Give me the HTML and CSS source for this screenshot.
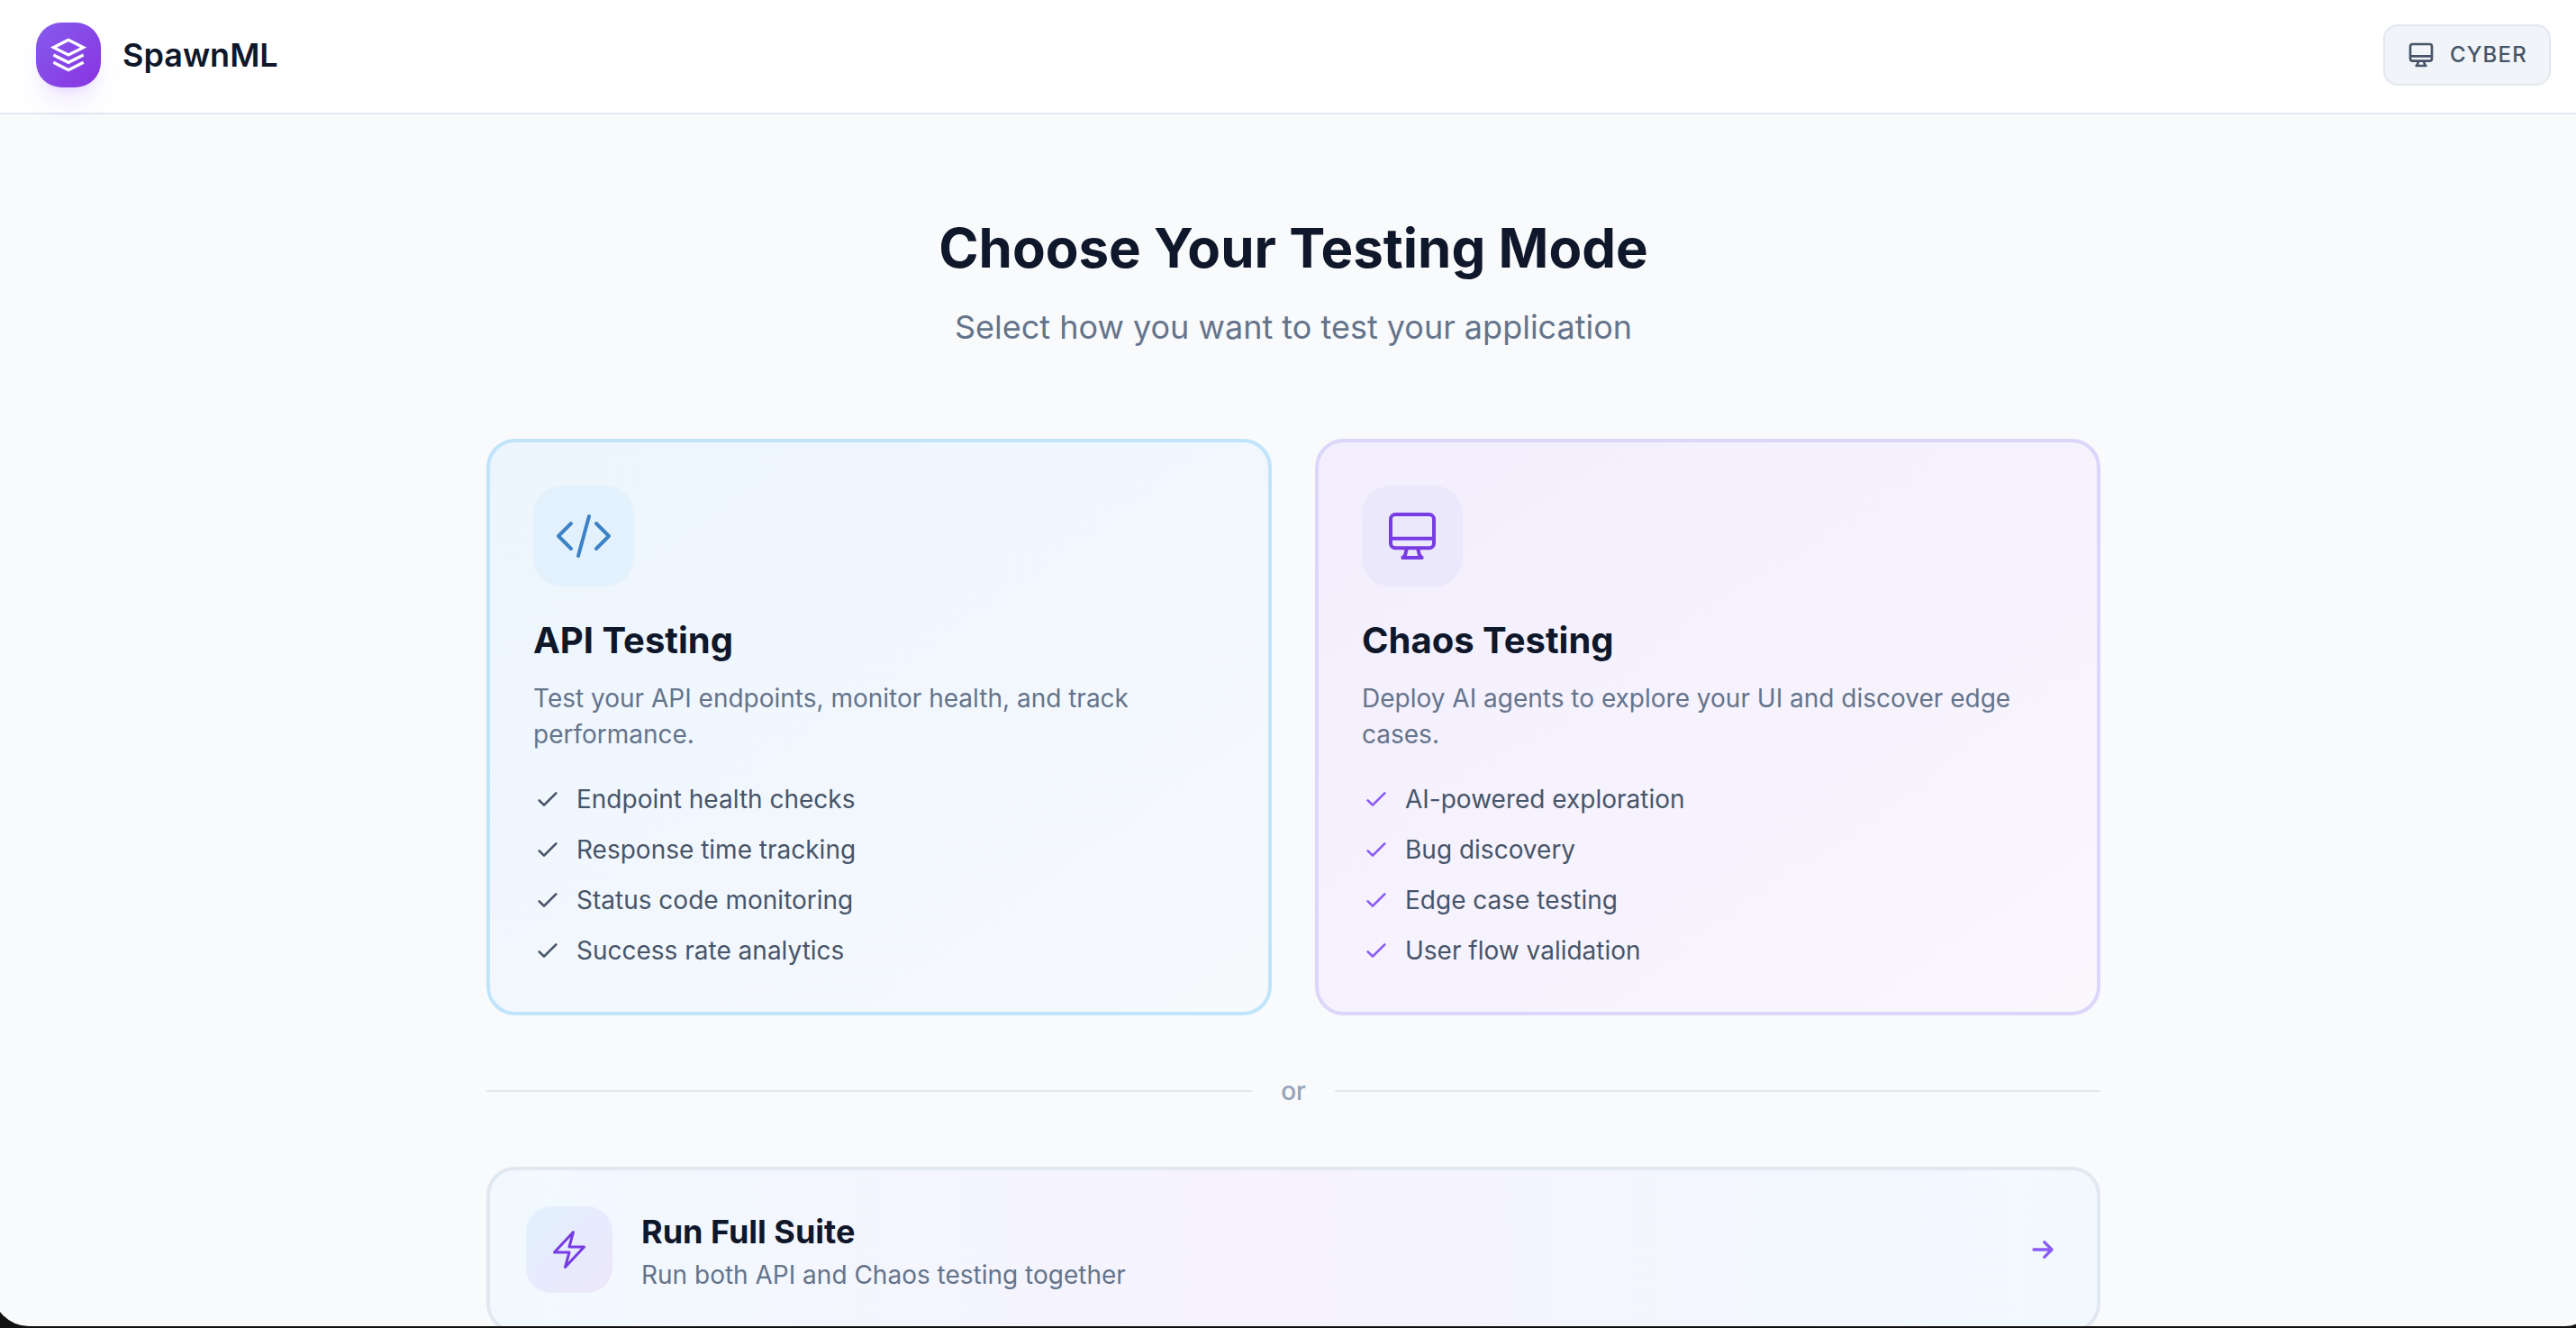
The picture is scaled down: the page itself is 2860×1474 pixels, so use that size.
FILE: index.html
```html
<!DOCTYPE html>
<html lang="en">
<head>
  <meta charset="UTF-8">
  <meta name="viewport" content="width=device-width, initial-scale=1.0">
  <title>SpawnML</title>
  <link rel="stylesheet" href="styles.css">
</head>
<body>
  <div class="app">
    <header class="header">
      <div class="brand">
        <div class="logo">
          <svg viewBox="0 0 24 24" stroke-width="2"><path d="M12 2L2 7l10 5 10-5-10-5zM2 17l10 5 10-5M2 12l10 5 10-5"/></svg>
        </div>
        <span class="brand-name">SpawnML</span>
      </div>
      <button class="theme-toggle" type="button">
        <svg class="icon round" viewBox="0 0 24 24" stroke-width="2"><path d="M9.75 17L9 20l-1 1h8l-1-1-.75-3M3 13h18M5 17h14a2 2 0 002-2V5a2 2 0 00-2-2H5a2 2 0 00-2 2v10a2 2 0 002 2z"/></svg>
        CYBER
      </button>
    </header>

    <main class="main">
      <div class="intro">
        <h1>Choose Your Testing Mode</h1>
        <p>Select how you want to test your application</p>
      </div>

      <div class="cards">
        <a class="card api" href="#api">
          <div class="tile">
            <svg class="round" viewBox="0 0 24 24" stroke-width="1.5"><path d="M17.25 6.75L22.5 12l-5.25 5.25m-10.5 0L1.5 12l5.25-5.25m7.5-3l-4.5 16.5"/></svg>
          </div>
          <h2>API Testing</h2>
          <p>Test your API endpoints, monitor health, and track performance.</p>
          <ul>
            <li><svg class="icon round" viewBox="0 0 24 24" stroke-width="2"><path d="M5 13l4 4L19 7"/></svg>Endpoint health checks</li>
            <li><svg class="icon round" viewBox="0 0 24 24" stroke-width="2"><path d="M5 13l4 4L19 7"/></svg>Response time tracking</li>
            <li><svg class="icon round" viewBox="0 0 24 24" stroke-width="2"><path d="M5 13l4 4L19 7"/></svg>Status code monitoring</li>
            <li><svg class="icon round" viewBox="0 0 24 24" stroke-width="2"><path d="M5 13l4 4L19 7"/></svg>Success rate analytics</li>
          </ul>
        </a>

        <a class="card chaos" href="#chaos">
          <div class="tile">
            <svg class="round" viewBox="0 0 24 24" stroke-width="1.5"><path d="M9.75 17L9 20l-1 1h8l-1-1-.75-3M3 13h18M5 17h14a2 2 0 002-2V5a2 2 0 00-2-2H5a2 2 0 00-2 2v10a2 2 0 002 2z"/></svg>
          </div>
          <h2>Chaos Testing</h2>
          <p>Deploy AI agents to explore your UI and discover edge cases.</p>
          <ul>
            <li><svg class="icon round" viewBox="0 0 24 24" stroke-width="2"><path d="M5 13l4 4L19 7"/></svg>AI-powered exploration</li>
            <li><svg class="icon round" viewBox="0 0 24 24" stroke-width="2"><path d="M5 13l4 4L19 7"/></svg>Bug discovery</li>
            <li><svg class="icon round" viewBox="0 0 24 24" stroke-width="2"><path d="M5 13l4 4L19 7"/></svg>Edge case testing</li>
            <li><svg class="icon round" viewBox="0 0 24 24" stroke-width="2"><path d="M5 13l4 4L19 7"/></svg>User flow validation</li>
          </ul>
        </a>
      </div>

      <div class="divider"><span>or</span></div>

      <a class="suite" href="#suite">
        <div class="suite-tile">
          <svg class="round" viewBox="0 0 24 24" stroke-width="1.5"><path d="M3.75 13.5l10.5-11.25L12 10.5h8.25L9.75 21.75 12 13.5H3.75z"/></svg>
        </div>
        <div class="suite-text">
          <h2>Run Full Suite</h2>
          <p>Run both API and Chaos testing together</p>
        </div>
        <svg class="arrow round" viewBox="0 0 24 24" stroke-width="2"><path d="M13 7l5 5m0 0l-5 5m5-5H6"/></svg>
      </a>
    </main>
  </div>
</body>
</html>
```

FILE: styles.css
```css
* {
  box-sizing: border-box;
}

html {
  background-color: #111;
}

body {
  margin: 0;
  height: 100vh;
  padding-bottom: 2px;
  overflow: hidden;
  font-family: Inter, sans-serif;
  font-size: 28px;
  line-height: 40px;
  color: #0f172a;
}

h1, h2, p, ul {
  margin: 0;
  padding: 0;
}

a {
  color: inherit;
  text-decoration: none;
}

svg {
  display: block;
  flex: none;
  fill: none;
  stroke: currentColor;
}

.round {
  stroke-linecap: round;
  stroke-linejoin: round;
}

.icon {
  width: 32px;
  height: 32px;
}

/* the window is a little wider than the visible area */
.app {
  height: 100%;
  margin: 0 -20px 0 -8px;
  overflow: hidden;
  background-color: #f9fafc;
  border-radius: 0 0 32px 40px;
}

/* Header */
.header {
  display: flex;
  align-items: center;
  justify-content: space-between;
  padding: 25px 48px 28px;
  background-color: #fff;
  border-bottom: 2px solid #e2e8f0;
}

.brand {
  display: flex;
  align-items: center;
  gap: 24px;
}

.logo {
  display: flex;
  align-items: center;
  justify-content: center;
  width: 72px;
  height: 72px;
  color: #fff;
  background: linear-gradient(135deg, #865cee, #8833e0);
  border-radius: 28px;
  box-shadow: 0 20px 30px -6px rgba(139, 92, 246, .15), 0 8px 12px -8px rgba(139, 92, 246, .2);
}

.logo svg {
  width: 40px;
  height: 40px;
}

.brand-name {
  font-size: 36px;
  font-weight: 600;
}

.theme-toggle {
  display: flex;
  align-items: center;
  gap: 16px;
  padding: 16px 24px;
  font-family: inherit;
  font-size: 24px;
  font-weight: 500;
  line-height: 32px;
  letter-spacing: .05em;
  color: #475569;
  background-color: #f1f5f9;
  border: 2px solid #e2e8f0;
  border-radius: 16px;
}

/* Main */
.main {
  max-width: 1792px;
  margin: 0 auto;
  padding: 112px 0;
}

.intro {
  margin-bottom: 96px;
  text-align: center;
}

.intro h1 {
  margin-bottom: 24px;
  font-size: 60px;
  line-height: 72px;
}

.intro p {
  font-size: 36px;
  line-height: 56px;
  color: #64748b;
}

/* Cards */
.cards {
  display: grid;
  grid-template-columns: 1fr 1fr;
  gap: 48px;
}

.card {
  padding: 48px;
  border: 4px solid;
  border-radius: 32px;
}

.card.api {
  background: linear-gradient(145deg, #ecf5fd, #f2f7fe 50%, #f6fafd) border-box;
  border-color: #c0e5fb;
}

.card.chaos {
  background: linear-gradient(145deg, #f2eefd, #f6f2fe 50%, #faf7fd) border-box;
  border-color: #dcd6fa;
}

.tile {
  display: flex;
  align-items: center;
  justify-content: center;
  width: 112px;
  height: 112px;
  margin-bottom: 32px;
  border-radius: 32px;
}

.tile svg {
  width: 64px;
  height: 64px;
}

.api .tile {
  color: #3b82c6;
  background-color: #e3f1fd;
}

.chaos .tile {
  color: #783be4;
  background-color: #ebe8fb;
}

.card h2 {
  margin-bottom: 16px;
  font-size: 40px;
  line-height: 56px;
}

.card p {
  margin-bottom: 32px;
  color: #64748b;
}

.card ul {
  display: grid;
  gap: 16px;
  list-style: none;
  color: #475569;
}

.card li {
  display: flex;
  align-items: center;
  gap: 16px;
}

.chaos li svg {
  color: #8b5cf6;
}

/* Divider */
.divider {
  display: flex;
  align-items: center;
  gap: 32px;
  margin: 64px 0;
  font-weight: 500;
  color: #94a3b8;
}

.divider::before,
.divider::after {
  content: "";
  flex: 1;
  height: 2px;
  background-color: #e2e8f0;
}

/* Full suite */
.suite {
  display: flex;
  align-items: center;
  gap: 32px;
  padding: 40px;
  background: linear-gradient(90deg, #f1f9ff, #f3f7fe 15%, #f6f2fe 48%, #f3f7fe 80%, #f1f9ff);
  border: 4px solid #e2e8f0;
  border-radius: 32px;
}

.suite-tile {
  display: flex;
  align-items: center;
  justify-content: center;
  width: 96px;
  height: 96px;
  color: #783be4;
  background: linear-gradient(135deg, #e1f2fd, #e7ebfd 50%, #ede7fb);
  border-radius: 28px;
}

.suite-tile svg {
  width: 48px;
  height: 48px;
}

.suite-text {
  flex: 1;
}

.suite-text h2 {
  font-size: 36px;
  line-height: 56px;
}

.suite-text p {
  color: #64748b;
}

.arrow {
  width: 40px;
  height: 40px;
  color: #8b5cf6;
}
```
